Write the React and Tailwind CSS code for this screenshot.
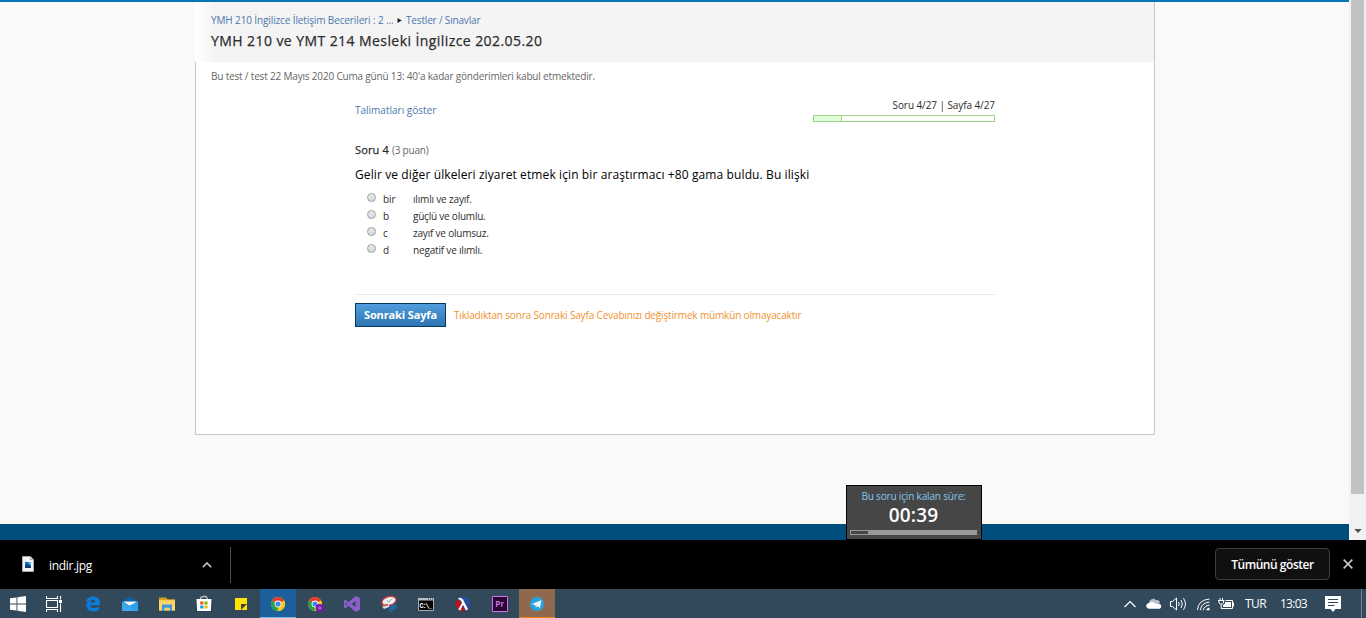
import React from 'react';

const options = [
  { key: 'bir', text: 'ılımlı ve zayıf.', cls: 'tracking-[-0.17px]' },
  { key: 'b', text: 'güçlü ve olumlu.', cls: 'tracking-[-0.22px]' },
  { key: 'c', text: 'zayıf ve olumsuz.', cls: 'tracking-[-0.2px]' },
  { key: 'd', text: 'negatif ve ılımlı.', cls: 'tracking-[-0.18px]' },
];

function Header() {
  return (
    <header className="h-[60px] border-r border-[#c7c7c7] bg-gradient-to-r from-white via-[#f4f4f4] via-[2%] to-[#f4f4f4] pl-4 pt-[11px]">
      <nav className="flex h-[15px] items-center text-[10px] leading-[15px] text-[#4b77ad]">
        <a className="w-[183px] whitespace-nowrap tracking-[-0.12px]">YMH 210 İngilizce İletişim Becerileri : 2 ...</a>
        <svg className="ml-[3px] mr-[4px]" width="5" height="5" viewBox="0 0 5 5"><path d="M0.5 0L4.8 2.5L0.5 5Z" fill="#222" /></svg>
        <a className="whitespace-nowrap tracking-[-0.17px]">Testler / Sınavlar</a>
      </nav>
      <h1 className="mt-[3px] h-5 whitespace-nowrap text-[14px] leading-5 tracking-[0.425px] text-[#2d2d2d] [-webkit-text-stroke:0.25px_#2d2d2d]">
        YMH 210 ve YMT 214 Mesleki İngilizce 202.05.20
      </h1>
    </header>
  );
}

function Question() {
  return (
    <section className="ml-[159px] w-[640px]">
      <div className="flex h-[38px] justify-between">
        <a className="mt-[13px] h-[15px] text-[10px] leading-[15px] text-[#4b77ad]">Talimatları göster</a>
        <div className="w-[182px]">
          <div className="mt-2 h-[15px] whitespace-nowrap text-right text-[10px] leading-[15px] tracking-[-0.08px] text-[#2d2d2d]">Soru 4/27 | Sayfa 4/27</div>
          <div className="mt-[2px] h-[7px] border border-[#9bd68a]">
            <div className="h-full w-[28px] border-r border-[#9bd68a] bg-[#dfffd8]" />
          </div>
        </div>
      </div>
      <div className="mt-[14px] h-4 whitespace-nowrap text-[11px] leading-4 text-[#2d2d2d]">
        <span className="tracking-[0.15px] [-webkit-text-stroke:0.25px_#2d2d2d]">Soru 4 </span>
        <span className="text-[10px] tracking-[-0.2px] text-[#666]">(3 puan)</span>
      </div>
      <p className="mt-2 h-[18px] whitespace-nowrap text-[12px] leading-[18px] tracking-[0.108px] text-black">
        Gelir ve diğer ülkeleri ziyaret etmek için bir araştırmacı +80 gama buldu. Bu ilişki
      </p>
      <div className="mt-[7px] h-[104px] border-b border-[#e8e8e8] pl-3">
        {options.map((o) => (
          <label key={o.key} className="flex h-[17px] whitespace-nowrap text-[10px] leading-[17px] text-[#2d2d2d]">
            <span className="mt-[2px] h-[9px] w-[9px] rounded-full border border-[#a0a0a0] bg-gradient-to-b from-[#e8e8e8] to-[#d9d9d9]" />
            <span className="ml-[7px] w-[30px] tracking-[-0.1px]">{o.key}</span>
            <span className={o.cls}>{o.text}</span>
          </label>
        ))}
      </div>
      <div className="mt-2 flex h-6 items-center">
        <button className="h-6 w-[91px] whitespace-nowrap border border-[#07395c] bg-gradient-to-b from-[#519ddd] to-[#2e75b2] text-[11px] font-bold leading-[22px] tracking-[-0.12px] text-white">
          Sonraki Sayfa
        </button>
        <span className="ml-2 whitespace-nowrap text-[10px] leading-[15px] tracking-[-0.155px] text-[#f0912d]">
          Tıkladıktan sonra Sonraki Sayfa Cevabınızı değiştirmek mümkün olmayacaktır
        </span>
      </div>
    </section>
  );
}

function Scrollbar() {
  return (
    <div className="flex h-[540px] w-[17px] flex-col items-center bg-[#f1f1f1]">
      <div className="h-[494px] w-[13px] bg-[#c1c1c1]" />
      <svg className="mt-[34px]" width="8" height="6" viewBox="0 0 8 6"><path d="M0.3 1H7.7L4 5Z" fill="#505050" /></svg>
    </div>
  );
}

function Timer() {
  return (
    <div className="absolute left-[846px] top-[485px] h-[55px] w-[136px] border border-black bg-[#464646] pl-[3px] pr-1 text-center">
      <div className="mt-[3px] h-[15px] whitespace-nowrap text-[10px] leading-[15px] tracking-[-0.17px] text-[#84c7ee]">Bu soru için kalan süre:</div>
      <div className="h-[22px] text-[19px] font-semibold leading-[22px] tracking-[0.15px] text-white">00:39</div>
      <div className="mt-[4px] h-[5px] bg-[#999] p-[1px]"><div className="h-[3px] w-[17px] bg-[#464646]" /></div>
    </div>
  );
}

function Downloads() {
  return (
    <div className="flex h-[49px] items-center bg-black text-white">
      <div className="flex h-9 w-[231px] items-center border-r border-[#4d4d4d] pl-[22px]">
        <svg className="-mt-[2px]" width="12" height="16" viewBox="0 0 12 16">
          <path d="M.5.5H8.5L11.5 3.5V15.5H.5Z" fill="#f5f5f5" stroke="#a5a5a5" />
          <path d="M8.5.5V3.5H11.5" fill="none" stroke="#a5a5a5" />
          <path d="M3 6H9V12H3Z" fill="#1769b1" /><path d="M3 10L5 8L9 11V12H3Z" fill="#123c70" /><path d="M6 6H9V9H8Z" fill="#55b8f4" />
        </svg>
        <span className="ml-[15px] mt-[2px] w-[153px] whitespace-nowrap text-[12px] leading-4 tracking-[-0.3px]">indir.jpg</span>
        <svg width="10" height="6" viewBox="0 0 10 6"><path d="M.8 5.2L5 1L9.2 5.2" fill="none" stroke="#ccc" strokeWidth="1.6" /></svg>
      </div>
      <button className="-mt-px ml-auto h-8 w-[115px] whitespace-nowrap rounded-[4px] border border-[#3c3d40] bg-[#101010] text-[12px] font-semibold leading-[29px] tracking-[-0.45px]">Tümünü göster</button>
      <svg className="-mt-px ml-[13px] mr-[13px]" width="10" height="10" viewBox="0 0 10 10"><path d="M.7.7L9.3 9.3M9.3.7L.7 9.3" stroke="#c4c4c4" strokeWidth="1.7" /></svg>
    </div>
  );
}

function Chrome({ badge }) {
  return (
    <svg width="18" height="18" viewBox="0 0 18 18">
      <circle cx="9" cy="9" r="7" fill="#fbc916" />
      <path d="M9 9L2.94 5.5A7 7 0 0 1 15.06 5.5Z" fill="#e33b2e" />
      <path d="M9 9L2.94 5.5A7 7 0 0 0 8.7 16Z" fill="#25a04b" />
      <path d="M9 9L15.06 5.5A7 7 0 0 1 8.5 16L11.5 11Z" fill="#fbc916" />
      <circle cx="9" cy="9" r="3.4" fill="#fff" /><circle cx="9" cy="9" r="2.6" fill="#4286ee" />
      {badge && <g><circle cx="13.7" cy="13" r="4.1" fill="#7719aa" /><circle cx="13.7" cy="13" r="1.1" fill="none" stroke="#c9a0dc" strokeWidth=".8" /></g>}
    </svg>
  );
}

const S = ({ children }) => <svg width="18" height="18" viewBox="0 0 18 18">{children}</svg>;

const apps = [
  <S key="edge"><path d="M1.5 8.2C2 3.8 5 1.5 9 1.5C13.8 1.5 16 4.6 16 8.2V10.2H6C6.2 12.2 8 13.1 10.2 13.1C12.2 13.1 13.8 12.6 15 11.7V15C13.4 16 11.5 16.4 9.5 16.4C5.2 16.4 2.4 14.2 2.4 10.8C2.4 8.2 3.8 6.2 6 5.2C4 5.3 2.5 6.5 1.5 8.2ZM6.1 7.5H11.4C11.4 5.8 10.5 4.8 9 4.8C7.5 4.8 6.3 5.8 6.1 7.5Z" fill="#0c7cdb" /></S>,
  <S key="mail"><path d="M1 6.5L9 1.5L17 6.5V16H1Z" fill="#0a63ab" /><path d="M2 6.5H16L9.5 11.5Z" fill="#f3f3f3" /><path d="M1 6.5L17 16H1Z" fill="#39a9ee" /><path d="M17 6.5V16H15L8 11Z" fill="#29a0e8" /></S>,
  <S key="folder"><path d="M1 2.5H8L9.5 4.2H17V15.5H1Z" fill="#dba022" /><path d="M1 5.2H17V15.5H1Z" fill="#ffd567" /><path d="M4 9.5H14V16H11.6V12.8H6.4V16H4Z" fill="#3f97df" /></S>,
  <S key="store"><path d="M5.5 5V3.5Q6 1.2 8 2Q10.8-.1 12.3 3.5V5" fill="none" stroke="#c7d0d8" strokeWidth="1.2" /><path d="M1.5 4H16.5L15.8 16H2.2Z" fill="#fff" /><path d="M5.2 6.5H8.4V9.5H5.2Z" fill="#f05125" /><path d="M9.4 6.5H12.6V9.5H9.4Z" fill="#7eba00" /><path d="M5.2 10.5H8.4V13.5H5.2Z" fill="#00a3ee" /><path d="M9.4 10.5H12.6V13.5H9.4Z" fill="#ffb900" /></S>,
  <S key="notes"><path d="M3 3H15V15H3Z" fill="#ffe400" /><path d="M9 9H15L9 15Z" fill="#424242" /></S>,
  <Chrome key="chrome" />,
  <Chrome key="chrome2" badge />,
  <S key="vs"><path d="M12.6 1L17 3V14.8L12.6 17L5.5 10.8L2.5 13.2L1 12.4V5.6L2.5 4.8L5.5 7.2ZM12.6 5.8L8.6 9L12.6 12.2ZM2.6 7.2V10.8L4.2 9Z" fill="#8860c8" fillRule="evenodd" /></S>,
  <S key="snip"><ellipse cx="9" cy="6" rx="7.2" ry="4.3" fill="#edf0f2" stroke="#d43c36" strokeWidth="1.2" transform="rotate(-15 9 6)" /><path d="M6.5 5L9 7L12 3.5" stroke="#8b9297" fill="none" strokeWidth=".8" /><path d="M2 11.5L9 9.5V12L4 14Z" fill="#d3dce1" /><path d="M2 11L8 9.5" stroke="#d6473f" strokeWidth="1.4" /><path d="M9 11.5L14.5 12.5M13.3 10L12 14" stroke="#1871b8" strokeWidth="1.4" /><circle cx="11" cy="14.8" r="1.5" fill="none" stroke="#1871b8" strokeWidth="1.2" /><circle cx="15" cy="12" r="1.5" fill="none" stroke="#1871b8" strokeWidth="1.2" /></S>,
  <S key="cmd"><path d="M1.5 3.5H16.5V15.5H1.5Z" fill="#050505" stroke="#a8adb1" /><path d="M1 3H17V5.5H1Z" fill="#b9c1c8" /><path d="M11 4H12M13 4H14M15 4H16" stroke="#284c79" /><text x="2.6" y="12.8" fontSize="6.8" fontWeight="700" fill="#fff" fontFamily="Liberation Mono, monospace" textLength="12.5">C:\_</text></S>,
  <S key="racket"><circle cx="9" cy="9" r="7.3" fill="#294e9f" /><path d="M3.8 3.9L8.6 8.2L5 15.2A7.3 7.3 0 0 1 3.8 3.9ZM9 10.5L11.5 15.9A7.3 7.3 0 0 1 6.2 15.8Z" fill="#b71319" /><path d="M5 2.8Q8.8 3 10 6.4L14 14.3L12 15.6L9 9.8L6.2 15.6L4.2 14.4L8 8Q7 4.5 4 4.3Z" fill="#fff" /></S>,
  <S key="premiere"><path d="M1.5 1.5H16.5V16.5H1.5Z" fill="#2a0634" stroke="#d472ed" /><text x="4.3" y="12.2" fontSize="8.5" fontWeight="600" fill="#d985f0" fontFamily="Open Sans, sans-serif">Pr</text></S>,
  <S key="telegram"><circle cx="9" cy="9" r="7.2" fill="#2ba0dc" /><path d="M4 9L13.4 5.2L12 13L9.3 11L8 12.6L7.4 10.3Z" fill="#fff" /><path d="M7.4 10.3L12 6.6L8.5 10.7L8 12.6Z" fill="#b6d8ed" /></S>,
];

const cellClass = (i) =>
  i === 5
    ? 'bg-[#1b609c] border-b border-[#76b9ed] pt-px'
    : i === 12
      ? 'bg-[#8e694d] border-b border-[#ff7f0e] pt-px'
      : '';

function Taskbar() {
  return (
    <footer className="flex h-[29px] items-center bg-[#32495c] text-white">
      <div className="flex w-9 justify-center">
        <svg width="16" height="16" viewBox="0 0 16 16"><path d="M0 2.3L6.5 1.4V7.5H0ZM7.4 1.2L16 0V7.5H7.4ZM0 8.4H6.5V14.6L0 13.7ZM7.4 8.4H16V16L7.4 14.8Z" fill="#fff" /></svg>
      </div>
      <div className="flex w-[39px] pl-[10px]">
        <svg width="16" height="16" viewBox="0 0 16 16" stroke="#fff" fill="none"><path d="M.5 0V2.5H11.5V0M.5 16V13.5H11.5V16M.5 4.5H11.5V11.5H.5ZM14.5 0V3.5M14.5 7.5V16" strokeWidth="1.1" /><path d="M13 4H16V7H13Z" fill="#fff" stroke="none" /></svg>
      </div>
      <div className="flex h-full gap-px">
        {apps.map((icon, i) => (
          <div key={i} className={`flex h-full w-9 items-center justify-center ${cellClass(i)}`}>{icon}</div>
        ))}
      </div>
      <div className="ml-auto flex h-full items-center text-[12px]">
        <svg width="12" height="8" viewBox="0 0 12 8"><path d="M.5 7L6 1.5L11.5 7" stroke="#fff" strokeWidth="1.2" fill="none" /></svg>
        <svg className="ml-[10px]" width="16" height="11" viewBox="0 0 16 11"><path d="M3 5A4 4 0 0 1 10 2.2A3.5 3.5 0 0 1 14 5L8 7Z" fill="#b7c0c8" /><path d="M2.7 10.7A2.8 2.8 0 1 1 3.5 5Q6 2.8 9 5.4L13 5.8A2.5 2.5 0 0 1 13.4 10.7Z" fill="#fff" /></svg>
        <svg className="ml-2" width="17" height="14" viewBox="0 0 17 14" fill="none" stroke="#fff"><path d="M.5 4.5H2.5L6.5 1V13L2.5 9.5H.5ZM8.5 5Q10 7 8.5 9M11 3Q13.6 7 11 11M13.5 1.3Q17.5 7 13.5 12.7" /></svg>
        <svg className="ml-[10px] mt-[2px]" width="13" height="13" viewBox="0 0 13 13" fill="none" stroke="#fff"><path d="M.5 12Q1 2 12.5 1M3.4 12.2Q4 5 12.5 4M6.3 12.3Q7 8 12.5 7" /><path d="M9 12.3Q9.5 10 12.5 9.5V12.3Z" fill="#fff" stroke="none" /></svg>
        <svg className="ml-2" width="17" height="12" viewBox="0 0 17 12" fill="none" stroke="#fff"><path d="M2 0V2.5M4.5 0V2.5M0 2.5H6.5M1 2.5V5L2.2 6H4.3L5.5 5V2.5M3.2 6V10.5H14.5V2.5H7.5M15.5 4.5V8.5" /><path d="M7 4H13V9H5V7L7 5.5Z" fill="#fff" stroke="none" /></svg>
        <span className="ml-[10px] w-[35px] whitespace-nowrap leading-4 tracking-[-0.6px]">TUR</span>
        <span className="w-[45px] whitespace-nowrap leading-4 tracking-[-0.75px]">13:03</span>
        <svg width="16" height="16" viewBox="0 0 16 16"><path d="M0 0H16V13H10.5L8 16L5.5 13H0Z" fill="#fff" /><path d="M3 3.5H13M3 6.5H13M3 9.5H9.5" stroke="#32495c" /></svg>
        <div className="ml-5 mr-1 h-full w-px bg-[#71818e]" />
      </div>
    </footer>
  );
}

export default function App() {
  return (
    <div className="relative h-[618px] w-[1366px] overflow-hidden font-['Open_Sans','Noto_Sans',sans-serif]">
      <div className="flex h-[540px]">
        <main className="flex w-[1349px] flex-col border-t-2 border-[#0374b5] bg-[#faf9f7]">
          <div className="ml-[195px] w-[960px]">
            <Header />
            <div className="h-[373px] border border-t-0 border-[#c7c7c7] bg-white">
              <p className="ml-[15px] h-[28px] whitespace-nowrap pt-[7px] text-[10px] leading-[15px] tracking-[-0.18px] text-[#666]">
                Bu test / test 22 Mayıs 2020 Cuma günü 13: 40'a kadar gönderimleri kabul etmektedir.
              </p>
              <Question />
            </div>
          </div>
          <div className="mt-auto h-4 bg-[#004e7d]" />
        </main>
        <Scrollbar />
      </div>
      <Downloads />
      <Taskbar />
      <Timer />
    </div>
  );
}
